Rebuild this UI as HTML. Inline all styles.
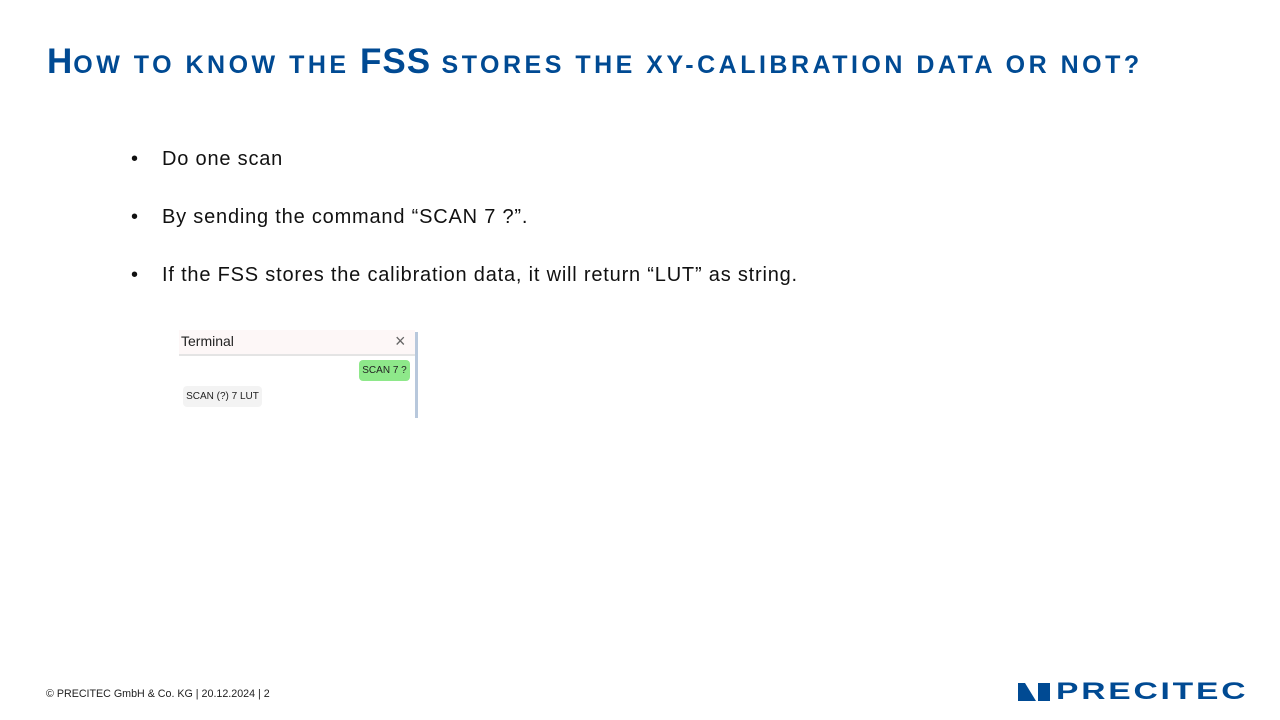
<!DOCTYPE html>
<html><head><meta charset="utf-8"><style>
body{margin:0;width:1280px;height:720px;background:#fff;position:relative;overflow:hidden;font-family:"Liberation Sans",sans-serif}
.t{position:absolute;left:47px;top:42px;color:#004a93;font-weight:bold;font-size:25px;white-space:nowrap;letter-spacing:3.5px}
.t .b{font-size:35px;letter-spacing:1px}
.bl{position:absolute;left:131px;font-size:20px;color:#111;white-space:nowrap}
.bl span{position:absolute;left:31px;letter-spacing:0.8px}
.term{position:absolute;left:179px;top:330px;width:240px;height:88px;background:#fff}
.foot{position:absolute;left:46px;top:688px;font-size:10.7px;color:#222}
</style></head><body>
<div class="t"><span class="b">H</span>OW TO KNOW THE <span class="b">FSS</span> STORES THE XY-CALIBRATION DATA OR NOT?</div>
<div class="bl" style="top:148px">•<span>Do one scan</span></div>
<div class="bl" style="top:206px">•<span>By sending the command “SCAN 7 ?”.</span></div>
<div class="bl" style="top:264px">•<span>If the FSS stores the calibration data, it will return “LUT” as string.</span></div>
<div class="term">
<div style="position:absolute;left:0;top:0;width:236px;height:24px;background:#fdf7f7;border-bottom:2px solid #e4e4e4"></div>
<div style="position:absolute;left:2px;top:3px;font-size:14px;color:#222">Terminal</div>
<div style="position:absolute;left:216px;top:1px;font-size:18px;color:#666">×</div>
<div style="position:absolute;left:236px;top:2px;width:3px;height:86px;background:#b8c8dc"></div>
<div style="position:absolute;left:180px;top:30px;width:51px;height:21px;background:#8ee88a;border-radius:4px;font-size:10px;line-height:21px;text-align:center;color:#222">SCAN 7 ?</div>
<div style="position:absolute;left:4px;top:56px;width:79px;height:21px;background:#f3f3f3;border-radius:4px;font-size:10px;line-height:21px;text-align:center;color:#222">SCAN (?) 7 LUT</div>
</div>
<div class="foot">© PRECITEC GmbH &amp; Co. KG | 20.12.2024 | 2</div>
<svg style="position:absolute;left:1018px;top:683px" width="32" height="18" viewBox="0 0 32 18"><path d="M0 0H7L18 18H0Z" fill="#004a93"/><path d="M20 0H32V18H20Z" fill="#004a93"/></svg>
<div style="position:absolute;left:1056px;top:678px;font-size:24px;font-weight:bold;color:#004a93;letter-spacing:2px;transform:scaleX(1.4);transform-origin:left">PRECITEC</div>
</body></html>
